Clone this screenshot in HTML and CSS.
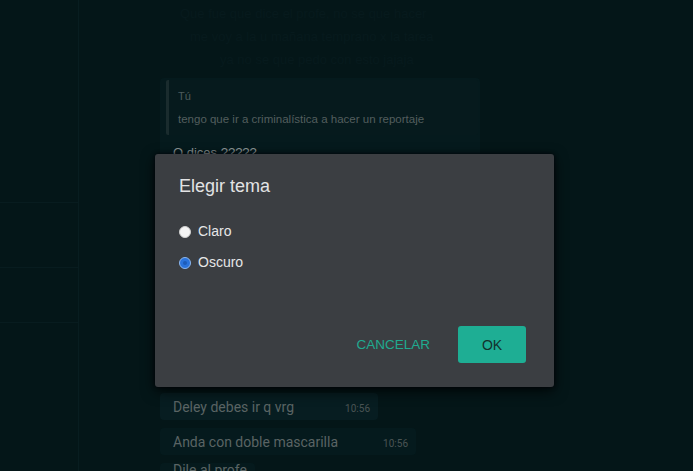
FILE: index.html
```html
<!DOCTYPE html>
<html lang="es">
<head>
<meta charset="utf-8">
<title>Elegir tema</title>
<link rel="stylesheet" href="styles.css">
</head>
<body>
<div class="app">
  <aside class="sidebar">
    <div class="side-row r1"></div>
    <div class="side-row r2"></div>
    <div class="side-row r3"></div>
  </aside>
  <main class="chat">
    <div class="faint-lines">
      <div class="faint f1">Que fue que dice el profe, no se que hacer</div>
      <div class="faint f2">me voy a la u mañana temprano x la tarea</div>
      <div class="faint f3">ya no se que pedo con esto jajaja</div>
    </div>
    <div class="bubble quoted-bubble">
      <div class="quote">
        <div class="quote-author">Tú</div>
        <div class="quote-text">tengo que ir a criminalística a hacer un reportaje</div>
      </div>
      <div class="msg-text">O dices ?????</div>
    </div>
    <div class="spacer"></div>
    <div class="bubble row b1">
      <span class="msg-text">Deley debes ir q vrg</span>
      <span class="time">10:56</span>
    </div>
    <div class="bubble row b2">
      <span class="msg-text">Anda con doble mascarilla</span>
      <span class="time">10:56</span>
    </div>
    <div class="bubble row b3">
      <span class="msg-text">Dile al profe</span>
    </div>
  </main>
</div>

<div class="dialog" role="dialog" aria-labelledby="dlg-title">
  <h2 id="dlg-title" class="dialog-title">Elegir tema</h2>
  <div class="options">
    <label class="option"><span class="radio"></span>Claro</label>
    <label class="option"><span class="radio checked"></span>Oscuro</label>
  </div>
  <div class="actions">
    <button class="btn-text">CANCELAR</button>
    <button class="btn-ok">OK</button>
  </div>
</div>
</body>
</html>
```

FILE: styles.css
```css
* { box-sizing: border-box; }

html, body {
  margin: 0;
  padding: 0;
  width: 693px;
  height: 471px;
  overflow: hidden;
  background: #041618;
  font-family: "Liberation Sans", Arial, sans-serif;
}

.app {
  display: flex;
  height: 471px;
  overflow: hidden;
}

.sidebar {
  width: 79px;
  flex: none;
  border-right: 1px solid #081d20;
  padding-top: 202px;
}

.side-row {
  border-top: 1px solid #081c1f;
}
.side-row.r1 { height: 65px; }
.side-row.r2 { height: 55px; }
.side-row.r3 { height: 40px; }

.chat {
  flex: 1;
  display: flex;
  flex-direction: column;
  align-items: flex-start;
  padding-left: 81px;
  padding-top: 6px;
  overflow: hidden;
}

.chat > * { flex: none; }

.faint-lines {
  display: flex;
  flex-direction: column;
  gap: 8px;
  height: 72px;
  padding-left: 20px;
}

.faint {
  font-size: 13px;
  color: #071a1d;
  white-space: nowrap;
}
.f2 { padding-left: 10px; }
.f3 { padding-left: 40px; }

.bubble {
  background: #051a1d;
  border-radius: 4px;
}

.quoted-bubble {
  width: 320px;
  padding: 2px 2px 6px 6px;
  height: 80px;
}

.quote {
  border-left: 3px solid #1a2c2e;
  background: #061a1d;
  padding: 10px 10px 9px 9px;
  border-radius: 2px;
}

.quote-author {
  font-size: 11px;
  line-height: 13px;
  color: #4c5b5c;
  margin-bottom: 9px;
}

.quote-text {
  font-size: 11.5px;
  line-height: 14px;
  color: #535e5e;
  white-space: nowrap;
}

.quoted-bubble .msg-text {
  display: block;
  margin-top: 10px;
  padding-left: 7px;
  font-size: 13px;
  color: #8c9595;
}

.spacer { height: 235px; }

.row {
  display: flex;
  align-items: flex-end;
  padding: 6px 8px 5px 13px;
  height: 27px;
  margin-bottom: 8px;
}

.row .msg-text {
  font-family: Roboto, "Liberation Sans", sans-serif;
  font-size: 14px;
  color: #5a6464;
  line-height: 16px;
}

.time {
  font-family: Roboto, "Liberation Sans", sans-serif;
  font-size: 10px;
  color: #4a5454;
  margin-left: 20px;
  line-height: 12px;
}

.b1 { width: 218px; background: #071d21; }
.b1 .time { margin-left: auto; }
.b2 { width: 256px; background: #051a1d; }
.b2 .time { margin-left: auto; }
.b3 { height: 20px; }

/* Dialog overlay */
.dialog {
  position: absolute;
  left: 155px;
  top: 154px;
  width: 399px;
  height: 233px;
  background: #3b3e42;
  border-radius: 3px;
  box-shadow: 0 4px 14px rgba(0, 0, 0, 0.75), 0 0 4px rgba(0, 0, 10, 0.8);
  padding: 22px 28px 24px 24px;
  display: flex;
  flex-direction: column;
}

.dialog-title {
  margin: 0;
  font-size: 18px;
  font-weight: normal;
  color: #e2e3e4;
  line-height: 20px;
}

.options {
  margin-top: 27px;
  display: flex;
  flex-direction: column;
  gap: 14px;
}

.option {
  display: flex;
  align-items: center;
  font-size: 14px;
  color: #e6e7e8;
  line-height: 17px;
  gap: 7px;
}

.radio {
  width: 12px;
  height: 12px;
  border-radius: 50%;
  background: #f4f4f4;
  border: 1px solid #d0d0d0;
  display: inline-flex;
  align-items: center;
  justify-content: center;
}

.radio.checked {
  background: #2a73db;
  border: 1px solid #8bb6ee;
}

.radio.checked::after {
  content: "";
  width: 4px;
  height: 4px;
  border-radius: 50%;
  background: #1d5cb8;
}

.actions {
  margin-top: auto;
  display: flex;
  justify-content: flex-end;
  align-items: center;
  gap: 28px;
}

.btn-text {
  background: none;
  border: none;
  padding: 0;
  font-family: "Liberation Sans", Arial, sans-serif;
  font-size: 13.5px;
  color: #1faa90;
  letter-spacing: 0;
}

.btn-ok {
  width: 68px;
  height: 37px;
  border: none;
  border-radius: 3px;
  background: #1eae94;
  color: #13322d;
  font-family: "Liberation Sans", Arial, sans-serif;
  font-size: 14px;
  padding: 0;
}
```
